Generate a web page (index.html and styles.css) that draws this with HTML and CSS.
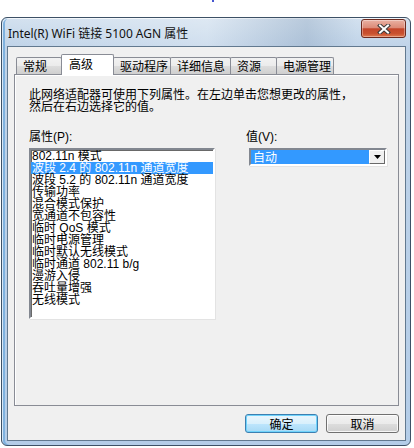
FILE: index.html
```html
<!DOCTYPE html>
<html lang="zh-CN">
<head>
  <meta charset="UTF-8" />
  <title>Intel(R) WiFi 链接 5100 AGN 属性</title>
  <link rel="stylesheet" href="styles.css">
</head>
<body>

  <div class="desk"><span class="dot"></span></div>

  <!-- Jendela dialog -->
  <div class="window">
    <div class="titlebar">
      <span class="title">Intel(R) WiFi 链接 5100 AGN 属性</span>
      <span class="close">
        <svg viewBox="0 0 14 10" width="14" height="10" aria-hidden="true">
          <path d="M3 1.5 L11 8.5 M11 1.5 L3 8.5" stroke="#3b3b3b" stroke-width="4" stroke-linecap="square"/>
          <path d="M3 1.5 L11 8.5 M11 1.5 L3 8.5" stroke="#ffffff" stroke-width="2" stroke-linecap="square"/>
        </svg>
      </span>
    </div>

    <div class="client">
      <div class="tabs">
        <div class="tab w46">常规</div>
        <div class="tab active w52">高级</div>
        <div class="tab w58">驱动程序</div>
        <div class="tab w60">详细信息</div>
        <div class="tab w47">资源</div>
        <div class="tab w58">电源管理</div>
      </div>

      <div class="panel">
        <p class="intro">此网络适配器可使用下列属性。在左边单击您想更改的属性，<br>然后在右边选择它的值。</p>

        <div class="fields">
          <div class="prop">
            <div class="label">属性(P):</div>
            <ul class="list">
              <li>802.11n 模式</li>
              <li class="selected">波段 2.4 的 802.11n 通道宽度</li>
              <li>波段 5.2 的 802.11n 通道宽度</li>
              <li>传输功率</li>
              <li>混合模式保护</li>
              <li>宽通道不包容性</li>
              <li>临时 QoS 模式</li>
              <li>临时电源管理</li>
              <li>临时默认无线模式</li>
              <li>临时通道 802.11 b/g</li>
              <li>漫游入侵</li>
              <li>吞吐量增强</li>
              <li>无线模式</li>
            </ul>
          </div>

          <div class="value">
            <div class="label">值(V):</div>
            <div class="combo">
              <span class="combo-text">自动</span>
              <span class="combo-btn">
                <svg viewBox="0 0 7 4" width="7" height="4" aria-hidden="true">
                  <path d="M0 0 H7 L3.5 4 Z" fill="#000"/>
                </svg>
              </span>
            </div>
          </div>
        </div>
      </div>

      <div class="buttons">
        <button class="btn default">确定</button>
        <button class="btn">取消</button>
      </div>
    </div>
  </div>

</body>
</html>
```

FILE: styles.css
```css
* { box-sizing: border-box; }
body {
  margin: 0;
  background: #fff;
  font-family: "Liberation Sans", "Noto Sans CJK SC", sans-serif;
  font-size: 12px;
  color: #000;
}
.desk {
  height: 17px;
}
.dot {
  display: block;
  width: 2px;
  height: 2px;
  margin-left: 212px;
  background: #4656d0;
}

/* Bingkai jendela */
.window {
  width: 410px;
  height: 429px;
  margin-left: 1px;
  padding: 0 4px 4px 5px;
  border: 1px solid #3d5166;
  border-radius: 6px;
  background: linear-gradient(to bottom, #d3e1ef 0, #bfd3e8 30px, #b4cde8 100%);
  box-shadow: inset 1px 1px 0 rgba(255,255,255,0.7), inset 3px 0 0 #7fb2df;
}
.titlebar {
  height: 28px;
  display: flex;
  justify-content: space-between;
  align-items: flex-start;
  background: linear-gradient(to right, rgba(255,255,255,0) 0, rgba(255,255,255,0.25) 200px, rgba(110,135,165,0.25) 300px, rgba(255,255,255,0) 350px);
}
.title {
  margin-top: 6px;
  padding-left: 1px;
  font-family: "Noto Sans", "Noto Sans CJK SC", sans-serif;
  font-size: 12px;
  color: #111;
}
.close {
  width: 45px;
  height: 19px;
  margin-top: 1px;
  display: flex;
  align-items: center;
  justify-content: center;
  border: 1px solid #6d2a1e;
  border-radius: 3px;
  background: linear-gradient(to bottom, #eab1a3 0, #dc8b78 45%, #c4452a 52%, #c9512f 80%, #e07a50 100%);
  box-shadow: inset 0 0 0 1px rgba(255,255,255,0.35);
}

/* Area isi */
.client {
  height: 395px;
  border: 1px solid #62798f;
  background: #f0f0f0;
}
.tabs {
  display: flex;
  align-items: flex-end;
  height: 27px;
  padding: 7px 0 0 8px;
}
.tab {
  height: 17px;
  padding: 0 0 0 6px;
  line-height: 15px;
  border: 1px solid #898c95;
  border-bottom: none;
  border-radius: 2px 2px 0 0;
  background: linear-gradient(to bottom, #f2f2f2 0, #ebebeb 50%, #dddddd 51%, #cfcfcf 100%);
  font-family: "Noto Sans CJK SC", sans-serif;
  white-space: nowrap;
}
.tab + .tab { margin-left: -1px; }
.tab.active {
  height: 21px;
  margin-bottom: -1px;
  line-height: 18px;
  padding-left: 7px;
  background: #fff;
  position: relative;
  z-index: 1;
}
.w46 { width: 46px; }
.w47 { width: 47px; }
.w52 { width: 53px; }
.w58 { width: 58px; }
.w60 { width: 61px; }

.panel {
  width: 385px;
  height: 332px;
  margin-left: 6px;
  border: 1px solid #898c95;
  background: #f0f0f0;
  box-shadow: inset 1px 1px 0 #fff;
}
.intro {
  margin: 13px 0 0 14px;
  line-height: 12px;
  font-family: "Noto Sans CJK SC", sans-serif;
}
.fields {
  display: flex;
  margin: 19px 0 0 14px;
}
.label {
  height: 12px;
  line-height: 12px;
  margin-bottom: 5px;
}
.prop { width: 186px; }
.list {
  list-style: none;
  margin: 0;
  padding: 0;
  height: 171px;
  border: 2px solid;
  border-color: #828790 #fff #fff #828790;
  box-shadow: inset 1px 1px 0 #696969, 1px 1px 0 #e3e3e3;
  background: #fff;
  overflow: hidden;
}
.list li {
  height: 12px;
  line-height: 12px;
  padding-left: 1px;
  white-space: nowrap;
}
.list li.selected {
  background: #3399ff;
  color: #fff;
}
.value {
  margin-left: 31px;
}
.combo {
  display: flex;
  width: 138px;
  height: 18px;
  margin-left: 3px;
  border: 2px solid;
  border-color: #828790 #fff #fff #828790;
  box-shadow: 1px 1px 0 #e3e3e3;
  background: #fff;
}
.combo-text {
  flex: 1;
  padding-left: 2px;
  line-height: 14px;
  background: #3399ff;
  color: #fff;
  font-family: "Noto Sans CJK SC", sans-serif;
}
.combo-btn {
  width: 16px;
  display: flex;
  align-items: center;
  justify-content: center;
  background: #f0f0f0;
  border: 1px solid;
  border-color: #fff #696969 #696969 #fff;
}

/* Tombol bawah */
.buttons {
  display: flex;
  justify-content: flex-end;
  gap: 8px;
  margin-top: 8px;
  padding-right: 6px;
}
.btn {
  width: 73px;
  height: 19px;
  padding: 0;
  border: 1px solid #707070;
  border-radius: 3px;
  background: linear-gradient(to bottom, #f2f2f2 0, #ebebeb 50%, #dddddd 51%, #cfcfcf 100%);
  box-shadow: inset 0 0 0 1px rgba(255,255,255,0.8);
  font-family: "Noto Sans CJK SC", sans-serif;
  font-size: 12px;
  line-height: 15px;
  color: #000;
}
.btn.default {
  border-color: #3c7fb1;
  background: linear-gradient(to bottom, #eaf6fd 0, #d9f0fc 50%, #bee6fd 51%, #a7d9f5 100%);
  box-shadow: inset 0 0 0 1px #70d3fb;
}
```
